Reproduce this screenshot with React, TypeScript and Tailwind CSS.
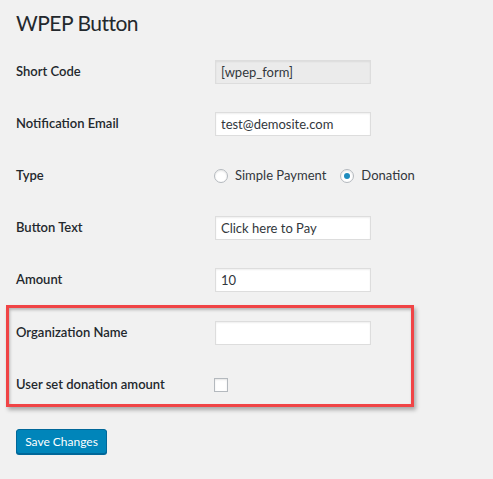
import React from 'react';

const font = { fontFamily: 'Lato, "Open Sans", Arial, sans-serif' };

function Row({ label, children }: { label: string; children: React.ReactNode }) {
  return (
    <div className="flex h-[24px] items-center">
      <div className="w-[199px] shrink-0 text-[13px] font-semibold text-[#23282d]">{label}</div>
      <div className="flex items-center">{children}</div>
    </div>
  );
}

function TextInput({ value = '', readOnly = false }: { value?: string; readOnly?: boolean }) {
  return (
    <input
      type="text"
      defaultValue={value}
      readOnly={readOnly}
      className={`h-[24px] w-[156px] border border-[#dddddd] px-[5px] text-[13px] text-[#32373c] shadow-[inset_0_1px_2px_rgba(0,0,0,0.07)] outline-none ${
        readOnly ? 'bg-[#ebebeb] text-[#555]' : 'bg-white'
      }`}
    />
  );
}

function Radio({ checked, label }: { checked?: boolean; label: string }) {
  return (
    <label className="flex items-center text-[13px] text-[#32373c]">
      <span className="flex h-[14px] w-[14px] items-center justify-center rounded-full border border-[#b4b9be] bg-white shadow-[inset_0_1px_2px_rgba(0,0,0,0.1)]">
        {checked && <span className="h-[6px] w-[6px] rounded-full bg-[#1e8cbe]" />}
      </span>
      <span className="ml-[7px]">{label}</span>
    </label>
  );
}

export default function App() {
  return (
    <div className="min-h-[479px] w-[493px] bg-[#f1f1f1] pl-[16px]" style={font}>
      <h1 className="h-[60px] pt-[8px] text-[21px] font-normal leading-[30px] tracking-[-0.5px] text-[#23282d]">WPEP Button</h1>

      <div className="flex flex-col gap-[28px]">
        <Row label="Short Code">
          <TextInput value="[wpep_form]" readOnly />
        </Row>
        <Row label="Notification Email">
          <TextInput value="test@demosite.com" />
        </Row>
        <Row label="Type">
          <div className="-ml-px flex items-center gap-[14px]">
            <Radio label="Simple Payment" />
            <Radio label="Donation" checked />
          </div>
        </Row>
        <Row label="Button Text">
          <TextInput value="Click here to Pay" />
        </Row>
        <Row label="Amount">
          <TextInput value="10" />
        </Row>
      </div>

      <div className="mt-[13px] -ml-[10px] flex w-[408px] flex-col gap-[28px] border-[3px] border-[#f04446] pt-[13px] pb-[7px] pl-[7px] shadow-[2px_3px_4px_rgba(0,0,0,0.3),inset_1px_2px_3px_rgba(0,0,0,0.25)]">
        <Row label="Organization Name">
          <TextInput />
        </Row>
        <Row label="User set donation amount">
          <span className="-ml-px block h-[14px] w-[14px] border border-[#b4b9be] bg-white shadow-[inset_0_1px_2px_rgba(0,0,0,0.1)]" />
        </Row>
      </div>

      <button
        type="button"
        className="mt-[22px] h-[25px] w-[91px] rounded-[3px] border border-[#006799] bg-[#0085ba] text-[12px] text-white shadow-[0_1px_0_#006799]"
      >
        Save Changes
      </button>
    </div>
  );
}
